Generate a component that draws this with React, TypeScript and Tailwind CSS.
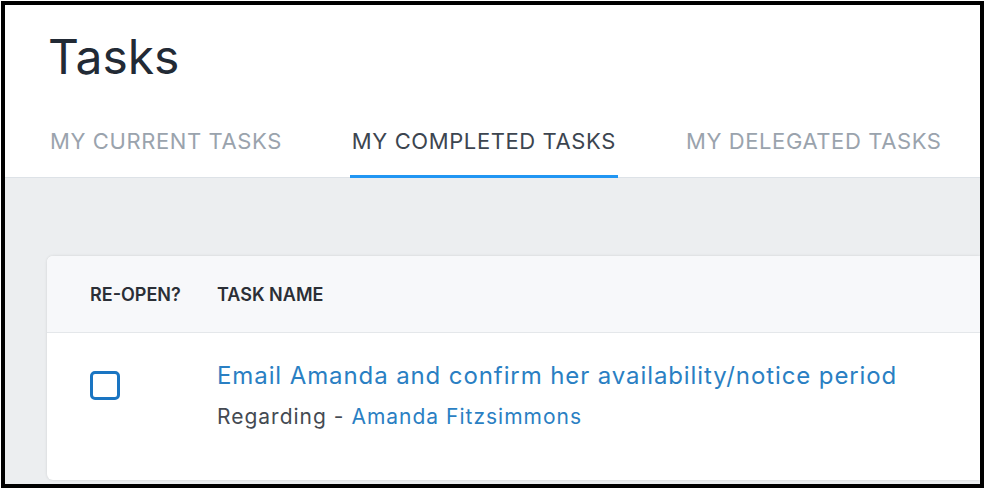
export default function App() {
  const tabs = [
    { label: 'MY CURRENT TASKS', active: false },
    { label: 'MY COMPLETED TASKS', active: true },
    { label: 'MY DELEGATED TASKS', active: false },
  ];

  return (
    <div className="w-[985px] h-[489px] bg-white overflow-hidden" style={{ fontFamily: 'Inter, Lato, sans-serif' }}>
      <div className="ml-[1px] mt-[1px] w-[983px] h-[487px] border-4 border-black flex flex-col overflow-hidden">
        {/* page header */}
        <div className="bg-white border-b border-[#dde2e7] pl-[45px] shrink-0 h-[173px] flex flex-col">
          <h1 className="text-[48px] leading-none text-[#222a35] pt-[28px] font-normal -ml-[2px]">Tasks</h1>
          <div className="flex gap-[70px] mt-auto">
            {tabs.map((tab) => (
              <div
                key={tab.label}
                className={
                  tab.active
                    ? 'text-[22px] tracking-[0.6px] leading-none pb-[23px] border-b-[3px] border-[#2196f3] text-[#3c4550] -mb-px px-[2px] -mx-[2px]'
                    : 'text-[22px] tracking-[0.6px] leading-none pb-[23px] border-b-[3px] border-transparent text-[#9aa3ad] -mb-px'
                }
              >
                {tab.label}
              </div>
            ))}
          </div>
        </div>

        {/* content */}
        <div className="flex-1 bg-[#eceef0] pl-[42px] pt-[78px]">
          <div className="bg-white rounded-tl-[6px] rounded-bl-[6px] shadow-[0_0_3px_rgba(0,0,0,0.12)] h-[224px]">
            <div className="h-[77px] bg-[#f7f8fa] border-b border-[#e4e7ea] rounded-tl-[6px] flex items-center pl-[43px] text-[18px] font-semibold text-[#2b2f36]">
              <div className="w-[127px]">RE-OPEN?</div>
              <div>TASK NAME</div>
            </div>
            <div className="flex pl-[43px] pt-[28px]">
              <div className="w-[127px] pt-[10px]">
                <div className="w-[30px] h-[29px] border-[3px] border-[#1a75c2] rounded-[5px]" />
              </div>
              <div>
                <div className="text-[24px] tracking-[0.9px] text-[#2a7fc3] leading-[30px]">
                  Email Amanda and confirm her availability/notice period
                </div>
                <div className="text-[21px] tracking-[1px] text-[#444a52] mt-[13px] leading-[26px]">
                  Regarding - <span className="text-[#2a7fc3]">Amanda Fitzsimmons</span>
                </div>
              </div>
            </div>
          </div>
        </div>
      </div>
    </div>
  );
}
